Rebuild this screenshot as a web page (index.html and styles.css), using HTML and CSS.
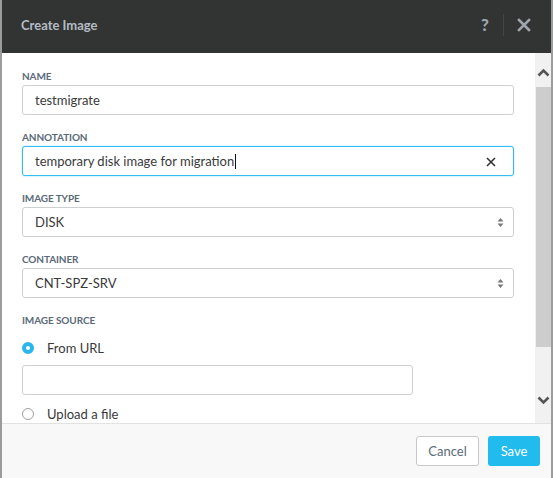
FILE: index.html
```html
<!DOCTYPE html>
<html>
<head>
<meta charset="utf-8">
<link rel="stylesheet" href="styles.css">
</head>
<body>
<div class="dialog">
  <div class="header">
    <div class="title">Create Image</div>
    <div class="header-actions">
      <span class="help">?</span>
      <span class="divider"></span>
      <svg class="close" width="14" height="14" viewBox="0 0 14 14"><path d="M2 2L12 12M12 2L2 12" stroke="#9ea6ae" stroke-width="2.6" stroke-linecap="square"/></svg>
    </div>
  </div>
  <div class="main">
    <div class="content">
      <div class="field">
        <div class="label">NAME</div>
        <div class="input"><span class="value">testmigrate</span></div>
      </div>
      <div class="field">
        <div class="label">ANNOTATION</div>
        <div class="input focused"><span class="value">temporary disk image for migration</span><span class="caret"></span>
          <svg class="clear" width="10" height="10" viewBox="0 0 10 10"><path d="M1 1L9 9M9 1L1 9" stroke="#333" stroke-width="1.6"/></svg>
        </div>
      </div>
      <div class="field">
        <div class="label">IMAGE TYPE</div>
        <div class="input select"><span class="value">DISK</span>
          <svg class="arrows" width="7" height="11" viewBox="0 0 7 11"><path d="M3.5 1L6.5 4.5H0.5Z M3.5 10L6.5 6.5H0.5Z" fill="#777"/></svg>
        </div>
      </div>
      <div class="field">
        <div class="label">CONTAINER</div>
        <div class="input select"><span class="value">CNT-SPZ-SRV</span>
          <svg class="arrows" width="7" height="11" viewBox="0 0 7 11"><path d="M3.5 1L6.5 4.5H0.5Z M3.5 10L6.5 6.5H0.5Z" fill="#777"/></svg>
        </div>
      </div>
      <div class="field source">
        <div class="label">IMAGE SOURCE</div>
        <div class="radio-row"><span class="radio checked"></span><span class="radio-text">From URL</span></div>
        <div class="input url"></div>
        <div class="radio-row"><span class="radio"></span><span class="radio-text">Upload a file</span></div>
      </div>
    </div>
    <div class="scrollbar">
      <div class="sb-btn"><svg width="13" height="9" viewBox="0 0 13 9"><path d="M1.5 7.5L6.5 2.5L11.5 7.5" fill="none" stroke="#555" stroke-width="2.6"/></svg></div>
      <div class="sb-thumb"></div>
      <div class="sb-track"></div>
      <div class="sb-btn down"><svg width="13" height="9" viewBox="0 0 13 9"><path d="M1.5 1.5L6.5 6.5L11.5 1.5" fill="none" stroke="#555" stroke-width="2.6"/></svg></div>
    </div>
  </div>
  <div class="footer">
    <div class="btn cancel">Cancel</div>
    <div class="btn save">Save</div>
  </div>
</div>
</body>
</html>
```
FILE: styles.css
```css
html, body {
  margin: 0;
  padding: 0;
}
body {
  background: #9c9c9c;
  width: 553px;
  height: 478px;
  overflow: hidden;
  font-family: Lato, "Liberation Sans", sans-serif;
}
.dialog {
  margin-left: 2px;
  width: 549px;
  height: 478px;
  display: flex;
  flex-direction: column;
  background: #fff;
}
.header {
  height: 53px;
  flex: none;
  background: #323433;
  display: flex;
  align-items: center;
  justify-content: space-between;
  padding: 0 0 4px 19px;
  box-sizing: border-box;
}
.title {
  color: #b4bcc4;
  font-weight: bold;
  font-size: 13px;
}
.header-actions {
  display: flex;
  align-items: center;
  height: 100%;
}
.help {
  color: #9ea6ae;
  font-weight: 900;
  font-size: 17px;
  width: 14px;
  text-align: center;
}
.divider {
  width: 1px;
  height: 22px;
  background: #444645;
  margin: 0 13px 0 11px;
}
.close {
  margin-right: 20px;
}
.main {
  height: 370px;
  flex: none;
  display: flex;
}
.content {
  flex: 1;
  padding: 17px 21px 0 20px;
  overflow: hidden;
}
.field {
  margin-bottom: 16px;
}
.label {
  font-size: 10px;
  line-height: 12px;
  height: 12px;
  color: #5b6a79;
  font-weight: bold;
  margin-bottom: 3px;
  letter-spacing: -0.1px;
}
.input {
  height: 30px;
  box-sizing: border-box;
  border: 1px solid #cfcfcf;
  border-radius: 3px;
  display: flex;
  align-items: center;
  padding: 0 12px;
  position: relative;
  background: #fff;
}
.value {
  font-size: 13px;
  color: #3a3a3a;
}
.focused {
  border-color: #35bdee;
  box-shadow: 0 0 2px rgba(53, 189, 238, 0.5);
}
.caret {
  width: 1px;
  height: 15px;
  background: #111;
  margin-left: 1px;
}
.clear {
  position: absolute;
  right: 17px;
  top: 10px;
}
.arrows {
  position: absolute;
  right: 9px;
  top: 9px;
}
.source .label {
  margin-bottom: 14px;
}
.radio-row {
  display: flex;
  align-items: center;
  height: 16px;
}
.radio {
  width: 12px;
  height: 12px;
  box-sizing: border-box;
  border-radius: 50%;
  border: 1px solid #a0a0a0;
  background: #fff;
  flex: none;
}
.radio.checked {
  border: 4px solid #29b6ec;
  background: #fff;
}
.radio-text {
  font-size: 13px;
  color: #3a3a3a;
  margin-left: 13px;
}
.url {
  width: 391px;
  height: 30px;
  margin: 9px 0 11px;
}
.scrollbar {
  width: 16px;
  flex: none;
  background: #f1f1f1;
  display: flex;
  flex-direction: column;
}
.sb-btn {
  height: 34px;
  box-sizing: border-box;
  display: flex;
  justify-content: center;
  align-items: flex-start;
  padding: 15px 0 0 1px;
}
.sb-btn.down {
  height: 40px;
  padding-top: 13px;
}
.sb-thumb {
  height: 260px;
  background: #cdcdcd;
  margin-left: 1px;
}
.sb-track {
  flex: 1;
}
.footer {
  flex: 1;
  background: #f8f8f8;
  border-top: 1px solid #e2e2e2;
  display: flex;
  justify-content: flex-end;
  align-items: flex-start;
  padding: 12px 11px 0 0;
  gap: 9px;
}
.btn {
  height: 30px;
  box-sizing: border-box;
  border-radius: 3px;
  font-size: 13px;
  display: flex;
  align-items: center;
  justify-content: center;
}
.cancel {
  width: 63px;
  border: 1px solid #c8c8c8;
  background: #fff;
  color: #5b6a79;
}
.save {
  width: 52px;
  background: #22bbee;
  color: #fff;
}
```
